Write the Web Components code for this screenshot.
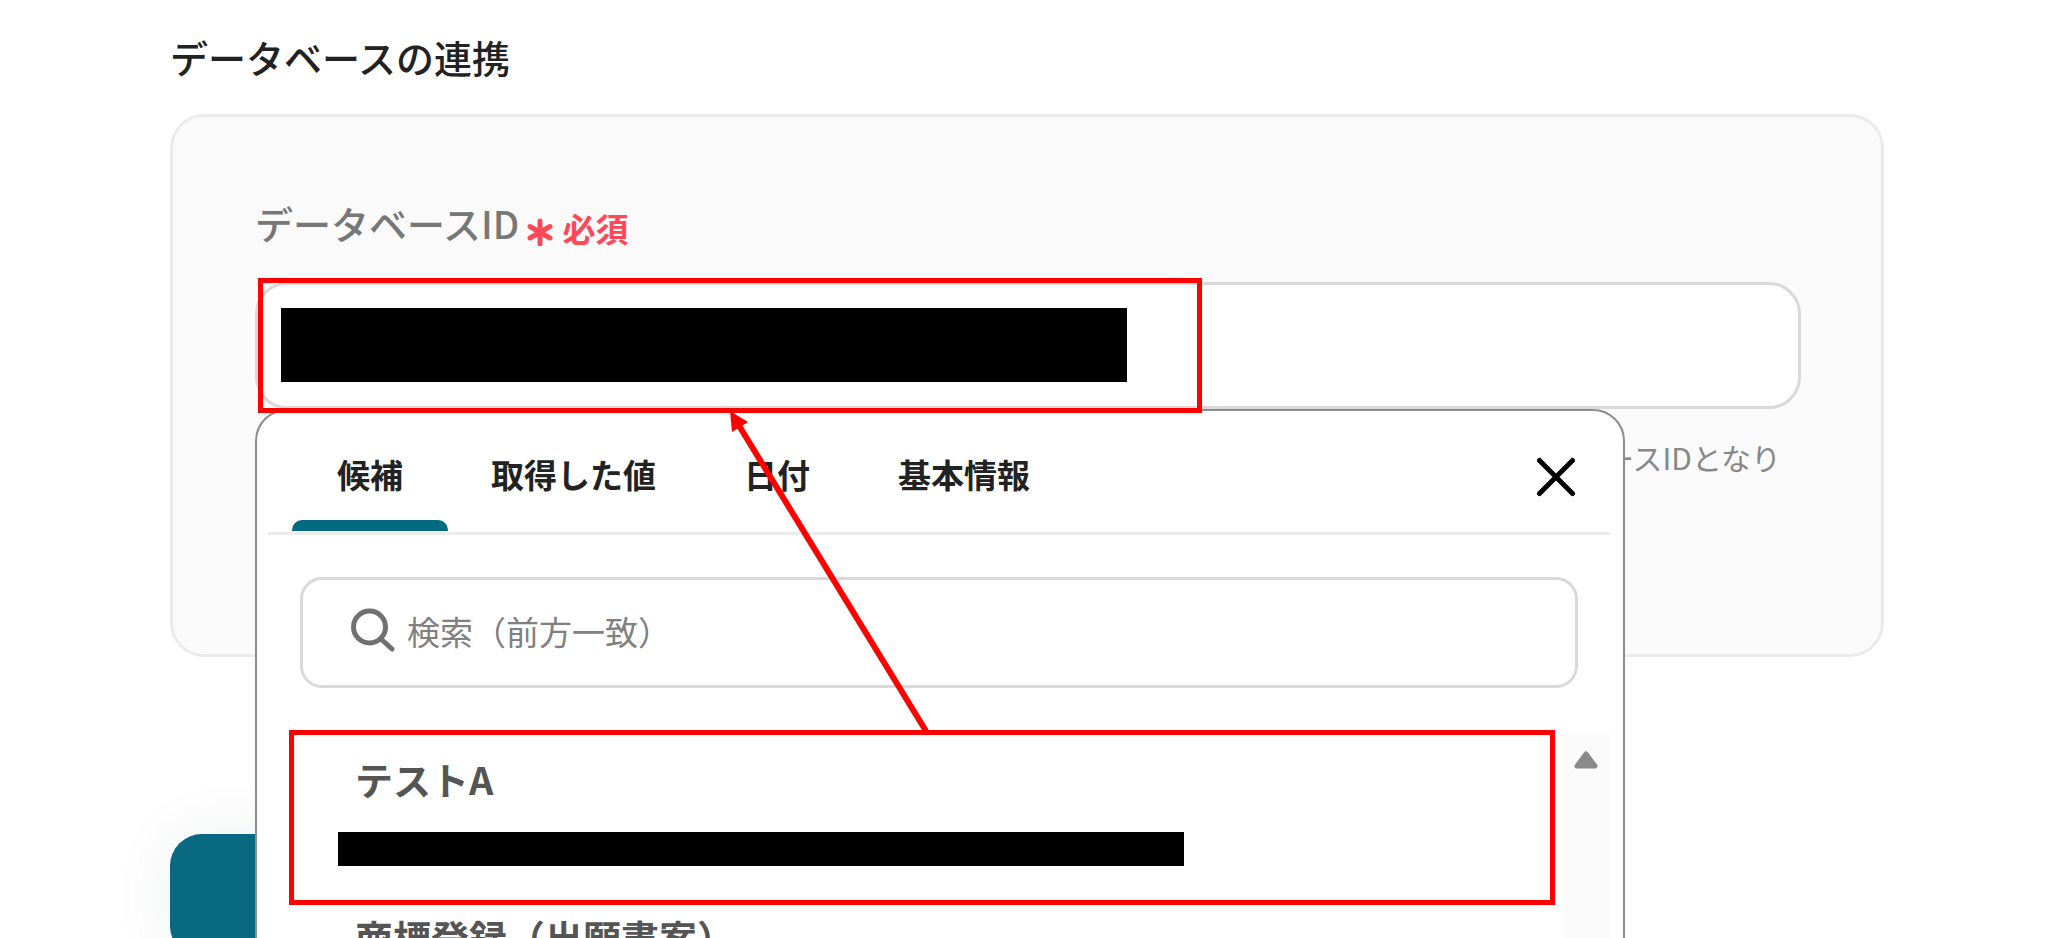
<!DOCTYPE html>
<html lang="ja">
<head>
<meta charset="utf-8">
<title>データベースの連携</title>
<style>
  html, body { margin: 0; height: 100%; }
  body {
    overflow: hidden;
    background: #fff;
    color: #222;
    font-family: "Noto Sans CJK JP", "Noto Sans", sans-serif;
    font-weight: 500;
  }
</style>
</head>
<body>
<link-page></link-page>

<template id="t-page">
  <style>
    :host { display: block; box-sizing: border-box; height: 100%; overflow: hidden; padding: 33px 164px 0 170px; }
    h1 { margin: 0 0 33px; font-size: 38px; line-height: 48px; font-weight: 500; }
    .submit {
      display: block; width: 640px; height: 124px; padding: 0; border: 0; border-radius: 32px;
      margin-top: 177px; background: #096882; box-shadow: 0 0 60px rgba(20, 50, 70, .08);
    }
  </style>
  <h1>データベースの連携</h1>
  <settings-card>
    <id-field>
      <suggest-panel slot="panel">
        <suggest-item slot="item" marked>テストA</suggest-item>
        <suggest-item slot="item">商標登録（出願書案）</suggest-item>
      </suggest-panel>
    </id-field>
  </settings-card>
  <button class="submit" type="button" aria-label="送信"></button>
</template>

<template id="t-card">
  <style>
    :host {
      display: block; padding: 82px 80px 173px 82px;
      border: 3px solid #ebebeb; border-radius: 34px; background: #fafafa;
    }
  </style>
  <slot></slot>
</template>

<template id="t-field">
  <style>
    :host { display: block; position: relative; }
    .caption { display: flex; align-items: center; line-height: 48px; margin-bottom: 35px; }
    label { font-size: 38px; color: #777; }
    .required { display: flex; align-items: center; gap: 8px; margin: 8px 0 -2px 7px; font-size: 33px; line-height: 42px; font-weight: 700; color: #ff4858; }
    .required svg { width: 28px; height: 28px; margin-top: 8px; }
    .box { position: relative; }
    input {
      display: block; box-sizing: border-box; width: 100%; height: 127px; padding: 0 32px;
      border: 3px solid #d9d9d9; border-radius: 32px; background: #fff;
      font: inherit; font-size: 33px; outline: 0;
    }
    .mask { position: absolute; left: 26px; top: 26px; width: 846px; height: 74px; background: #000; }
    .help { margin: 24px 20px 0 0; text-align: right; font-size: 30px; line-height: 48px; font-weight: 400; color: #888; }
    .panel { position: absolute; left: 0; right: 176px; top: 210px; }
    .mark { position: absolute; left: 3px; top: 79px; width: 934px; height: 125px; border: 5px solid #f00; }
    .arrow { position: absolute; left: 465px; top: 211px; width: 220px; height: 325px; }
  </style>
  <div class="caption">
    <label for="db">データベースID</label>
    <span class="required">
      <svg viewBox="0 0 28 28" fill="none" stroke="currentColor" stroke-width="5" stroke-linecap="round" aria-hidden="true"><path d="M14 3v23M4 8.500l20 11.500M24 8.500l-20 11.500"/></svg>
      必須
    </span>
  </div>
  <div class="box"><input id="db" type="text" autocomplete="off"><div class="mask"></div></div>
  <p class="help">ースIDとなり</p>
  <div class="panel"><slot name="panel"></slot></div>
  <div class="mark"></div>
  <svg class="arrow" viewBox="0 0 220 325" aria-hidden="true"><path d="M18 14L206 321" stroke="#f00" stroke-width="6"/><path d="M10 1L28 12L12 22Z" fill="#f00"/></svg>
</template>

<template id="t-panel">
  <style>
    :host {
      display: block; box-sizing: border-box; height: 640px; overflow: hidden;
      border: 2px solid #8c8c8c; border-radius: 32px; background: #fff;
    }
    header { display: flex; align-items: stretch; height: 121px; margin: 0 13px 0 11px; padding-left: 25px; border-bottom: 3px solid #ececec; }
    button { border: 0; background: none; color: inherit; font: inherit; }
    .tab { position: relative; padding: 4px 44px 0; font-size: 33px; line-height: 48px; font-weight: 700; }
    .tab[aria-selected=true]::after { content: ""; position: absolute; inset: auto -1px 1px; height: 11px; border-radius: 10px 10px 0 0; background: #046a82; }
    nav { display: flex; flex: 1; }
    .close { width: 40px; padding: 10px 0 0; margin-right: 34px; }
    .close svg { display: block; width: 40px; height: 40px; }
    .search {
      display: flex; align-items: center; box-sizing: border-box; height: 111px;
      margin: 42px 45px 0 43px; padding: 0 48px 4px; border: 3px solid #d9d9d9; border-radius: 22px;
    }
    .search svg { width: 48px; height: 48px; flex: none; }
    .search input { flex: 1; min-width: 0; height: 48px; padding: 0 0 0 8px; border: 0; outline: 0; background: none; font: inherit; font-size: 33px; font-weight: 400; }
    .search input::placeholder { color: #808080; opacity: 1; }
    .list { display: grid; grid-template-columns: 1fr 46px; height: 320px; margin: 44px 14px 0 32px; column-gap: 8px; }
    .track { background: #fbfbfb; }
    .track svg { display: block; width: 26px; height: 20px; margin: 18px auto 0; }
  </style>
  <header>
    <nav role="tablist">
      <button class="tab" type="button" role="tab" aria-selected="true">候補</button>
      <button class="tab" type="button" role="tab" aria-selected="false">取得した値</button>
      <button class="tab" type="button" role="tab" aria-selected="false">日付</button>
      <button class="tab" type="button" role="tab" aria-selected="false">基本情報</button>
    </nav>
    <button class="close" type="button" aria-label="閉じる"><svg viewBox="0 0 40 40" stroke="#000" stroke-width="5" stroke-linecap="round"><path d="M3.500 3.500l33 33M36.500 3.500l-33 33"/></svg></button>
  </header>
  <div class="search">
    <svg viewBox="0 0 48 48" fill="none" stroke="#707070" stroke-width="5" stroke-linecap="round" aria-hidden="true"><circle cx="18.500" cy="20" r="16"/><path d="M30 32l11 10"/></svg>
    <input type="text" placeholder="検索（前方一致）" aria-label="検索（前方一致）">
  </div>
  <div class="list">
    <div><slot name="item"></slot></div>
    <div class="track"><svg viewBox="0 0 26 20" aria-hidden="true"><path d="M13 4L22 16H4Z" fill="#8a8a8a" stroke="#8a8a8a" stroke-width="5" stroke-linejoin="round"/></svg></div>
  </div>
</template>

<template id="t-item">
  <style>
    :host { display: block; position: relative; box-sizing: border-box; height: 158px; padding: 23px 0 0 49px; }
    .name { display: block; padding-left: 17px; font-size: 38px; line-height: 48px; font-weight: 700; color: #555; }
    .mask { width: 846px; height: 34px; margin-top: 29px; background: #000; }
    :host([marked])::after { content: ""; position: absolute; inset: -2px 0 -15px; border: 5px solid #f00; }
  </style>
  <span class="name"><slot></slot></span>
  <div class="mask"></div>
</template>

<script>
  const define = (name, template) => customElements.define(name, class extends HTMLElement {
    constructor() {
      super();
      this.attachShadow({ mode: "open" })
        .append(document.getElementById(template).content.cloneNode(true));
    }
  });
  define("suggest-item", "t-item");
  define("suggest-panel", "t-panel");
  define("id-field", "t-field");
  define("settings-card", "t-card");
  define("link-page", "t-page");
</script>
</body>
</html>
